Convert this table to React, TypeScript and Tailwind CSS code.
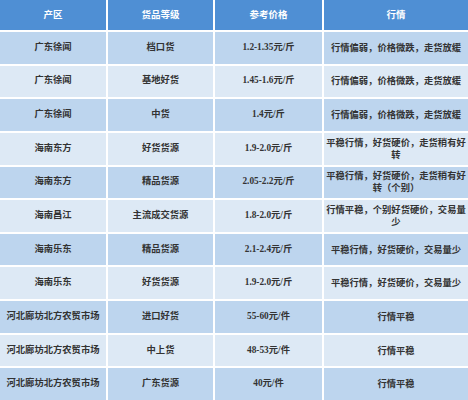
import React from "react";

const rows: [string, string, string, string][] = [
  ["广东徐闻", "档口货", "1.2-1.35元/斤", "行情偏弱，价格微跌，走货放缓"],
  ["广东徐闻", "基地好货", "1.45-1.6元/斤", "行情偏弱，价格微跌，走货放缓"],
  ["广东徐闻", "中货", "1.4元/斤", "行情偏弱，价格微跌，走货放缓"],
  ["海南东方", "好货货源", "1.9-2.0元/斤", "平稳行情，好货硬价，走货稍有好转"],
  ["海南东方", "精品货源", "2.05-2.2元/斤", "平稳行情，好货硬价，走货稍有好转（个别）"],
  ["海南昌江", "主流成交货源", "1.8-2.0元/斤", "行情平稳，个别好货硬价，交易量少"],
  ["海南乐东", "精品货源", "2.1-2.4元/斤", "平稳行情，好货硬价，交易量少"],
  ["海南乐东", "好货货源", "1.9-2.0元/斤", "平稳行情，好货硬价，交易量少"],
  ["河北廊坊北方农贸市场", "进口好货", "55-60元/件", "行情平稳"],
  ["河北廊坊北方农贸市场", "中上货", "48-53元/件", "行情平稳"],
  ["河北廊坊北方农贸市场", "广东货源", "40元/件", "行情平稳"],
];

const font = { fontFamily: '"Liberation Serif", "Noto Sans CJK SC", serif' };

export default function App() {
  return (
    <div
      className="w-[468px] h-[400px] bg-white flex flex-col gap-[2px] overflow-hidden text-[#333] font-bold"
      style={font}
    >
      <div className="h-[30px] shrink-0 grid grid-cols-[106px_105px_107px_1fr] gap-[2px] text-white text-[9.5px]">
        <div className="bg-[#4f8fd4] flex items-center justify-center">产区</div>
        <div className="bg-[#4f8fd4] flex items-center justify-center">货品等级</div>
        <div className="bg-[#4f8fd4] flex items-center justify-center">参考价格</div>
        <div className="bg-[#4f8fd4] flex items-center justify-center">行情</div>
      </div>
      {rows.map((r, i) => {
        const bg = i % 2 === 0 ? "bg-[#bdd5ee]" : "bg-[#dde9f5]";
        return (
          <div
            key={i}
            className="flex-1 grid grid-cols-[106px_105px_107px_1fr] gap-[2px] text-[9.3px]"
          >
            <div className={`${bg} flex items-center justify-center`}>{r[0]}</div>
            <div className={`${bg} flex items-center justify-center`}>{r[1]}</div>
            <div className={`${bg} flex items-center justify-center`}>{r[2]}</div>
            <div className={`${bg} flex items-center justify-center text-center leading-[12px] px-[1px]`}>
              {r[3]}
            </div>
          </div>
        );
      })}
    </div>
  );
}
